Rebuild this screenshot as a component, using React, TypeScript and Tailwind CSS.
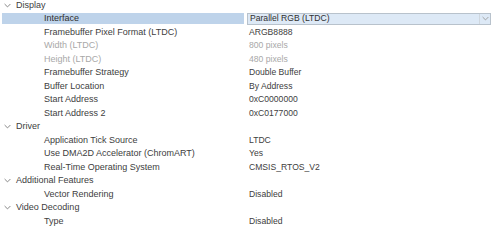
import React from "react";

type Item = { label: string; value: string; disabled?: boolean; selected?: boolean };
type Group = { title: string; items: Item[] };

const groups: Group[] = [
  {
    title: "Display",
    items: [
      { label: "Interface", value: "Parallel RGB (LTDC)", selected: true },
      { label: "Framebuffer Pixel Format (LTDC)", value: "ARGB8888" },
      { label: "Width (LTDC)", value: "800 pixels", disabled: true },
      { label: "Height (LTDC)", value: "480 pixels", disabled: true },
      { label: "Framebuffer Strategy", value: "Double Buffer" },
      { label: "Buffer Location", value: "By Address" },
      { label: "Start Address", value: "0xC0000000" },
      { label: "Start Address 2", value: "0xC0177000" },
    ],
  },
  {
    title: "Driver",
    items: [
      { label: "Application Tick Source", value: "LTDC" },
      { label: "Use DMA2D Accelerator (ChromART)", value: "Yes" },
      { label: "Real-Time Operating System", value: "CMSIS_RTOS_V2" },
    ],
  },
  {
    title: "Additional Features",
    items: [{ label: "Vector Rendering", value: "Disabled" }],
  },
  {
    title: "Video Decoding",
    items: [{ label: "Type", value: "Disabled" }],
  },
];

const Chevron = ({ color = "#7a7a7a" }: { color?: string }) => (
  <svg width="7" height="5" viewBox="0 0 7 5" className="shrink-0">
    <path d="M0.6 1 L3.5 3.9 L6.4 1" fill="none" stroke={color} strokeWidth="0.9" />
  </svg>
);

const Row = ({ item }: { item: Item }) => {
  const color = item.disabled ? "text-[#a8a8a8]" : "text-[#404040]";
  if (item.selected) {
    return (
      <div className="flex h-[13.5px] items-center">
        <div className="ml-[2px] flex h-[11px] w-[242px] items-center bg-[#bed3ea] pl-[42px] text-[#303030]">
          {item.label}
        </div>
        <div className="ml-[3px] flex h-[12px] w-[244px] items-center border border-[#b8c2cc] bg-[#dde9f6]">
          <span className="flex-1 pl-[2px] text-[8.6px] text-[#303030]">{item.value}</span>
          <span className="flex h-full w-[11px] items-center justify-center border-l border-[#cfd7df]">
            <Chevron color="#9a9a9a" />
          </span>
        </div>
      </div>
    );
  }
  return (
    <div className="flex h-[13.5px] items-center">
      <div className={`w-[249px] pl-[44px] ${color}`}>{item.label}</div>
      <div className={`text-[8.6px] ${color}`}>{item.value}</div>
    </div>
  );
};

export default function App() {
  return (
    <div
      className="h-[242px] w-[494px] overflow-hidden bg-white text-[9px] leading-none"
      style={{ fontFamily: '"Liberation Sans", Arial, sans-serif' }}
    >
      <div className="-mt-[1.5px]">
        {groups.map((g) => (
          <div key={g.title}>
            <div className="flex h-[13.5px] items-center text-[#404040]">
              <span className="ml-[4px] mr-[5px] flex items-center">
                <Chevron />
              </span>
              <span>{g.title}</span>
            </div>
            {g.items.map((it) => (
              <Row key={it.label} item={it} />
            ))}
          </div>
        ))}
      </div>
    </div>
  );
}
